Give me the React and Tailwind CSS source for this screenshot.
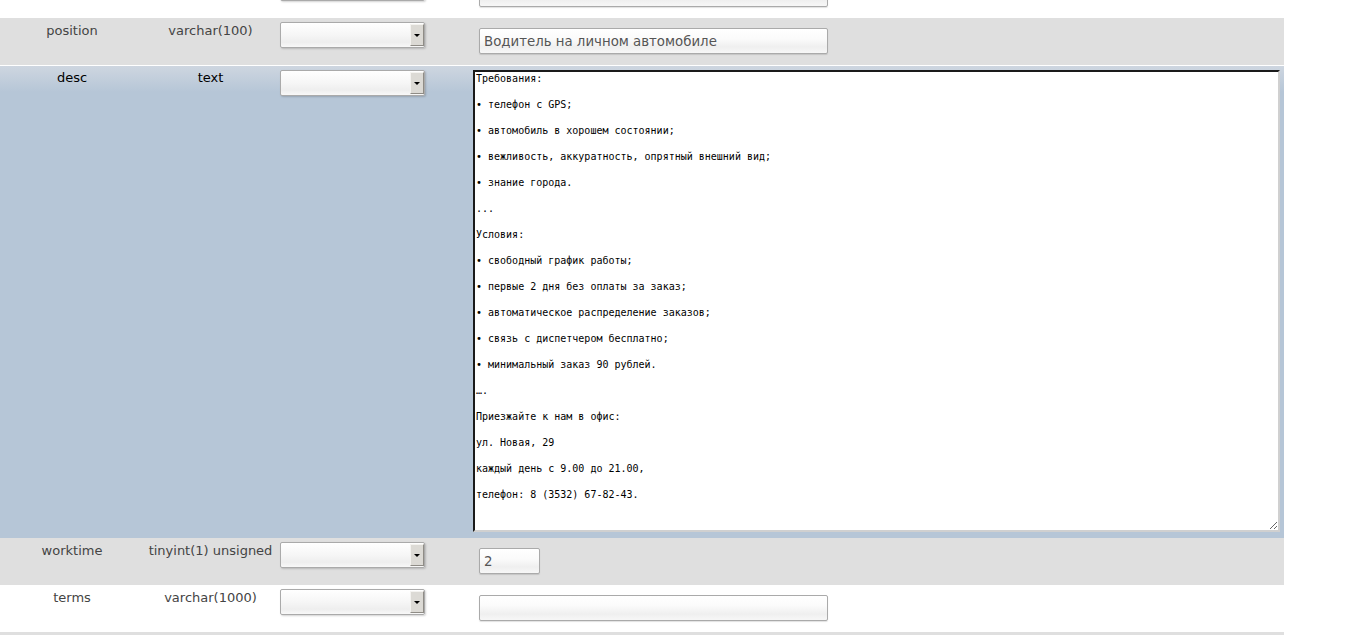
import React from "react";

const text = [
  "Требования:",
  "• телефон с GPS;",
  "• автомобиль в хорошем состоянии;",
  "• вежливость, аккуратность, опрятный внешний вид;",
  "• знание города.",
  "...",
  "Условия:",
  "• свободный график работы;",
  "• первые 2 дня без оплаты за заказ;",
  "• автоматическое распределение заказов;",
  "• связь с диспетчером бесплатно;",
  "• минимальный заказ 90 рублей.",
  "….",
  "Приезжайте к нам в офис:",
  "ул. Новая, 29",
  "каждый день с 9.00 до 21.00,",
  "телефон: 8 (3532) 67-82-43.",
].join("\n\n");

function Select() {
  return (
    <div className="flex w-[145px] h-[26px] rounded-[2px] border border-[#aaa] bg-[linear-gradient(#ffffff,#f6f6f6_50%,#eeeeee_80%,#f8f8f8)] shadow-[1px_1px_2px_rgba(0,0,0,0.18)]">
      <div className="flex-1" />
      <div className="w-[14px] my-[1px] flex items-center justify-center bg-[#dcdad5] border-t border-l border-t-[#f4f3f0] border-l-[#f4f3f0] border-r border-b border-r-[#8f8c86] border-b-[#8f8c86]">
        <div className="w-0 h-0 border-l-[3px] border-r-[3px] border-t-[3px] border-l-transparent border-r-transparent border-t-black" />
      </div>
    </div>
  );
}

function Input({ w, value }) {
  return (
    <div
      className={`${w} h-[26px] mt-[6px] ml-[6px] rounded-[2px] border border-[#aaa] bg-[linear-gradient(#ffffff,#fbfbfb_40%,#efefef_75%,#f7f7f7)] shadow-[0_1px_1px_rgba(0,0,0,0.12)] pl-[4px] flex items-center text-[#555] text-[13.333px]`}
    >
      {value}
    </div>
  );
}

function Row({ bg, name, type, children, labelColor = "text-[#444]", labelPad = "pt-[5px]", className = "" }) {
  return (
    <div className={`flex w-[1284px] ${bg} ${className}`}>
      <div className={`w-[144px] shrink-0 text-center ${labelPad} ${labelColor}`}>{name}</div>
      <div className={`w-[133px] shrink-0 text-center ${labelPad} ${labelColor}`}>{type}</div>
      <div className="w-[196px] shrink-0 pl-[3px] pt-[4px]">
        <Select />
      </div>
      <div className="flex-1 pt-[4px] pr-[4px]">{children}</div>
    </div>
  );
}

export default function App() {
  return (
    <div className="w-[1370px] h-[635px] overflow-hidden bg-white font-['DejaVu_Sans',sans-serif] text-[13px] leading-[15px]">
      <Row bg="bg-white" name="" type="" className="h-[47px] -mt-[29px]">
        <Input w="w-[349px]" value="" />
      </Row>
      <Row bg="bg-[#dfdfdf]" name="position" type="varchar(100)" className="h-[47px]">
        <Input w="w-[349px]" value="Водитель на личном автомобиле" />
      </Row>
      <div className="h-[1px] w-[1284px] bg-white" />
      <Row
        bg="bg-[linear-gradient(#ced6e0,#b6c6d7_26px,#b6c6d7)]"
        name="desc"
        type="text"
        labelColor="text-black"
        labelPad="pt-[4px]"
        className="h-[472px]"
      >
        <textarea
          readOnly
          value={text}
          className="block w-full h-[462px] bg-white border-2 border-t-[#1a1a1a] border-l-[#1a1a1a] border-r-[#d0d0d0] border-b-[#d0d0d0] px-[1px] pt-0 font-['DejaVu_Sans_Mono',monospace] text-[10px] leading-[13px] text-black outline-none overflow-hidden"
        />
      </Row>
      <Row bg="bg-[#dfdfdf]" name="worktime" type="tinyint(1) unsigned" className="h-[47px]">
        <Input w="w-[61px]" value="2" />
      </Row>
      <Row bg="bg-white" name="terms" type="varchar(1000)" className="h-[47px]">
        <Input w="w-[349px]" value="" />
      </Row>
      <div className="h-[47px] w-[1284px] bg-[#dfdfdf]" />
    </div>
  );
}
